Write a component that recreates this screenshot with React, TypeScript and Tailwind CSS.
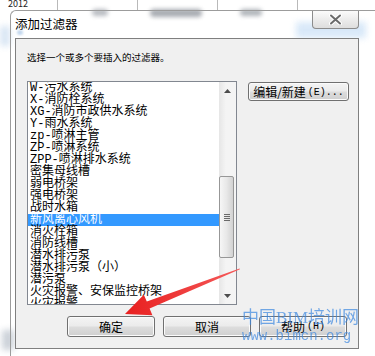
import React from 'react';

const items = [
    'W-污水系统',
    'X-消防栓系统',
    'XG-消防市政供水系统',
    'Y-雨水系统',
    'zp-喷淋主管',
    'ZP-喷淋系统',
    'ZPP-喷淋排水系统',
    '密集母线槽',
    '弱电桥架',
    '强电桥架',
    '战时水箱',
    '新风离心风机',
    '消火栓箱',
    '消防线槽',
    '潜水排污泵',
    '潜水排污泵（小）',
    '潜污泵',
    '火灾报警、安保监控桥架',
    '火灾报警',
];

const SELECTED = 11;

const btn =
    'flex items-center justify-center rounded-[3px] border border-[#707070] bg-[linear-gradient(to_bottom,#f4f4f4_0%,#ebebeb_48%,#dddddd_52%,#cfcfcf_100%)] shadow-[inset_0_0_0_1px_#fbfbfb] text-[12px] text-black';

const CloseIcon = () => (
    <svg width="13" height="11" viewBox="0 0 13 11">
        <path d="M2 1.5 L11 9.5 M11 1.5 L2 9.5" stroke="#ffffff" strokeWidth={4} strokeLinecap="round" />
        <path d="M2 1.5 L11 9.5 M11 1.5 L2 9.5" stroke="#6b6b6b" strokeWidth={2} strokeLinecap="round" />
    </svg>
);

const Arrow = ({ down }: { down?: boolean }) => (
    <svg width="7" height="4" viewBox="0 0 7 4">
        <path d={down ? 'M0 0 L7 0 L3.5 4 Z' : 'M0 4 L7 4 L3.5 0 Z'} fill="#4d4d4d" />
    </svg>
);

const ListBox = () => (
    <div className="flex w-[210px] h-[224px] border border-[#828790] bg-white">
        <div className="flex-1 overflow-hidden font-['Liberation_Mono','Noto_Sans_CJK_SC',monospace] text-[12px] leading-[12px]">
            {items.map((t, i) => (
                <div
                    key={i}
                    className={
                        i === SELECTED
                            ? 'h-[12px] pl-[2px] whitespace-nowrap bg-[#3399ff] text-white'
                            : 'h-[12px] pl-[2px] whitespace-nowrap text-black'
                    }
                >
                    {t}
                </div>
            ))}
        </div>
        {/* scrollbar */}
        <div className="flex flex-col w-[17px] bg-[linear-gradient(to_right,#e6e6e6,#f4f4f4_40%,#f4f4f4)]">
            <div className="flex h-[17px] items-center justify-center">
                <Arrow />
            </div>
            <div className="flex-1">
                <div className="mt-[77px] flex h-[82px] w-[15px] items-center justify-center rounded-[2px] border border-[#979797] bg-[linear-gradient(to_right,#f6f6f6,#e8e8e8_50%,#d2d2d2)]">
                    <div className="flex flex-col gap-[1px]">
                        <div className="h-[1px] w-[6px] bg-[#6a6a6a]" />
                        <div className="h-[1px] w-[6px] bg-[#6a6a6a]" />
                        <div className="h-[1px] w-[6px] bg-[#6a6a6a]" />
                        <div className="h-[1px] w-[6px] bg-[#6a6a6a]" />
                    </div>
                </div>
            </div>
            <div className="flex h-[17px] items-center justify-center">
                <Arrow down />
            </div>
        </div>
    </div>
);

export default function App() {
    return (
        <div className="relative w-[375px] h-[356px] overflow-hidden bg-white font-['Noto_Sans_CJK_SC',sans-serif]">
            {/* blurred stuff behind the glass frame */}
            <div className="absolute left-[92px] top-[9px] h-[7px] w-[16px] rounded-full bg-[#8a9099] opacity-60 blur-[2px]" />
            <div className="absolute left-[150px] top-[9px] h-[8px] w-[52px] rounded-full bg-[#6f7680] opacity-60 blur-[2px]" />
            <div className="absolute left-[240px] top-[9px] h-[7px] w-[22px] rounded-full bg-[#7d848d] opacity-60 blur-[2px]" />
            <div className="absolute left-[296px] top-[22px] h-[16px] w-[70px] bg-[#cfe3f7] opacity-80 blur-[3px]" />
            <div className="absolute left-[0px] top-[26px] h-[20px] w-[10px] bg-[#c9dcf0] opacity-70 blur-[3px]" />
            <div className="absolute left-[17px] top-[30px] h-[5px] w-[6px] rounded-full bg-[#a9c6e6] opacity-70 blur-[1px]" />
            <div className="absolute left-[2px] top-[330px] h-[20px] w-[12px] bg-[#aab4c0] opacity-60 blur-[3px]" />

            {/* table header behind the dialog */}
            <div className="relative flex h-[10px] text-[9px] leading-[8px] text-[#222]">
                <div className="w-[58px] border-r border-[#b9b9b9] pl-[8px]">2012</div>
                <div className="w-[80px] border-r border-[#b9b9b9]" />
                <div className="w-[80px] border-r border-[#b9b9b9]" />
                <div className="w-[80px] border-r border-[#b9b9b9]" />
                <div className="flex-1" />
            </div>

            {/* dialog window */}
            <div className="relative ml-[10px] flex h-[346px] flex-col rounded-tl-[6px] border-l border-t border-[#9c9c9c]">
                <div className="flex h-[27px]">
                    <div className="flex items-center pl-[4px] text-[12.5px] text-black">添加过滤器</div>
                    <div className="ml-auto mr-[16px] flex h-[18px] w-[47px] items-center justify-center rounded-b-[4px] border border-t-0 border-[#8c8c8c] bg-[linear-gradient(to_bottom,#fbfbfb,#ececec_50%,#dedede)]">
                        <CloseIcon />
                    </div>
                </div>

                <div className="ml-[4px] flex h-[311px] w-[344px] flex-col border border-[#7f7f7f] bg-[#f0f0f0] pl-[11px]">
                    <div className="mt-[12px] h-[12px] text-[9.5px] leading-[12px] text-black">选择一个或多个要插入的过滤器。</div>

                    <div className="mt-[18px] flex items-start">
                        <ListBox />
                        <div className={btn + ' ml-[11px] mt-[1px] h-[19px] w-[101px] pt-[1px]'}>
                            编辑/新建<span className="ml-[2px] font-['Liberation_Mono',monospace] text-[10px]">(E)...</span>
                        </div>
                    </div>

                    <div className="ml-[40px] mt-[11px] flex gap-[8px]">
                        <div className={btn + ' h-[21px] w-[88px]'}>确定</div>
                        <div className={btn + ' h-[21px] w-[88px]'}>取消</div>
                        <div className={btn + ' h-[21px] w-[88px]'}>
                            帮助<span className="ml-[2px] font-['Liberation_Mono',monospace] text-[10px]">(H)</span>
                        </div>
                    </div>
                </div>
            </div>

            {/* red arrow annotation */}
            <svg className="absolute left-0 top-0" width="375" height="356" viewBox="0 0 375 356">
                <defs>
                    <linearGradient id="ar" x1="0" y1="0" x2="1" y2="0">
                        <stop offset="0" stopColor="#e81f1f" />
                        <stop offset="1" stopColor="#f55a5a" />
                    </linearGradient>
                </defs>
                <polygon
                    points="240,269.3 149.6,308.4 152.4,315.2 125,314 143.8,294.8 146.8,301.4 239.5,268.4"
                    fill="url(#ar)"
                />
            </svg>

            {/* watermark */}
            <div className="absolute left-[242px] top-[308px] flex flex-col text-[#3b87e0] opacity-70">
                <div className="font-['Liberation_Serif','Noto_Sans_CJK_SC',serif] text-[17px] leading-[20px] whitespace-nowrap">中国BIM培训网</div>
                <div className="font-['Liberation_Mono',monospace] text-[14px] leading-[16px] whitespace-nowrap">www.bimcn.org</div>
            </div>
        </div>
    );
}
